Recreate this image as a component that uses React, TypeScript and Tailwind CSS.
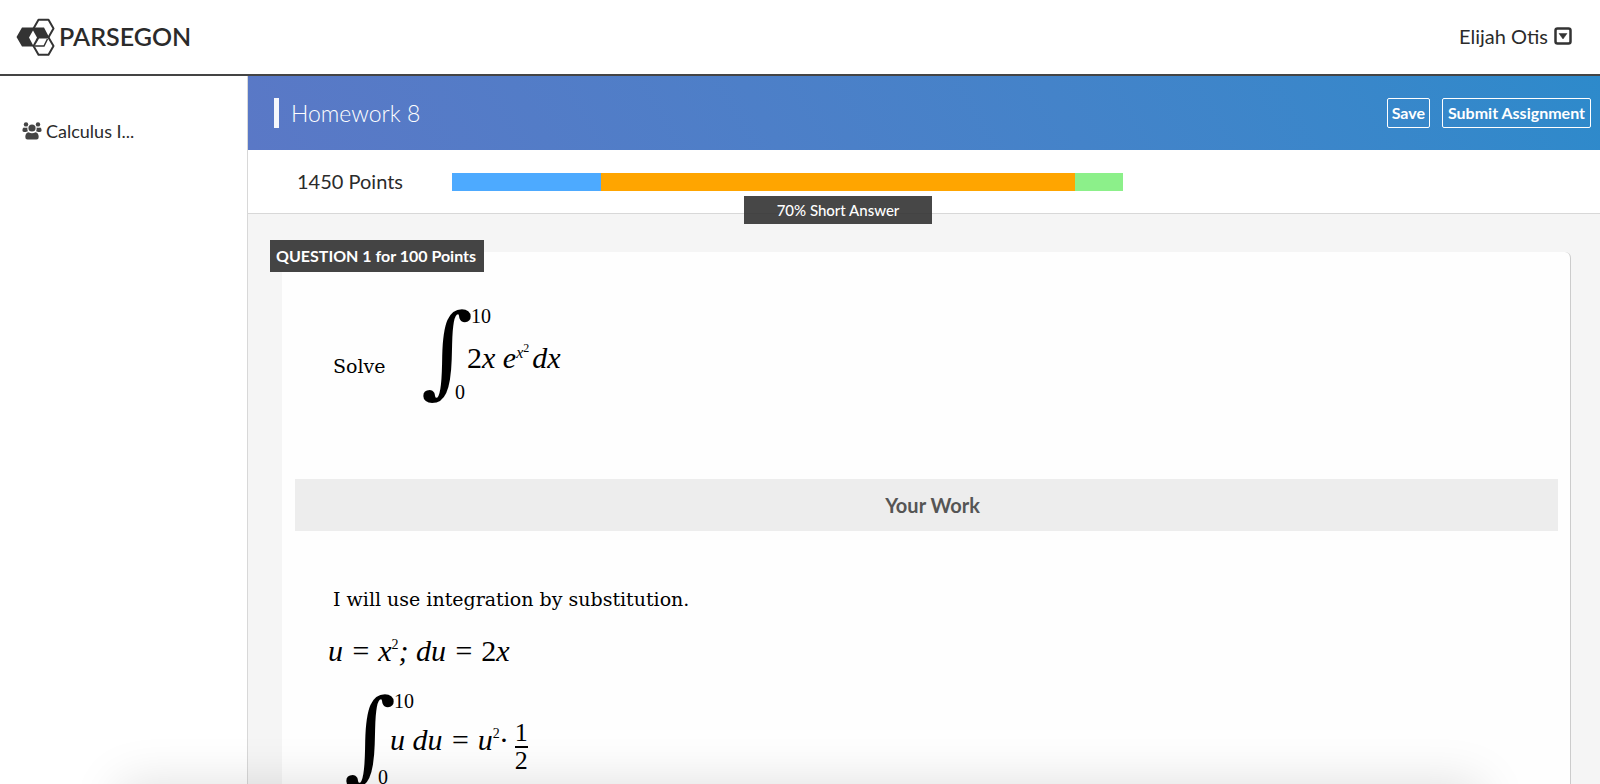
import { FC, ReactNode } from "react";

const segments = [
  { label: "Multiple Choice", share: 149, color: "bg-[#4daaff]" },
  { label: "Short Answer", share: 474, color: "bg-[#ffa500]" },
  { label: "Essay", share: 48, color: "bg-[#8cf08a]" },
];

const Logo: FC = () => (
  <svg viewBox="0 0 40 38" className="w-10 h-[38px]" aria-hidden="true">
    <path d="M0.500 19 6 9.500H28L33 19 31 22H20L18 28.500H6Z" fill="#333" />
    <g stroke="#333" strokeWidth="2" strokeLinejoin="round">
      <path d="M17.500 10.500 22.500 1.800H32.500L37.500 10.500 32.500 19.200H22.500Z" fill="none" />
      <path d="M17.500 28 22.500 19.500H32.500L37.500 28 32.500 36.700H22.500Z" fill="#fff" />
    </g>
    <path d="M13 19.500 17 12.500 21 19.500 17 27Z" fill="#fff" />
    <path d="M19 28H28L31.500 21" fill="none" stroke="#333" strokeWidth="1.500" />
  </svg>
);

const UsersIcon: FC = () => (
  <svg viewBox="0 0 20 18" className="w-5 h-[18px]" fill="#444" aria-hidden="true">
    <circle cx="10" cy="6" r="3.600" />
    <path d="M6.500 10.300Q10 12.300 13.500 10.300Q16.700 11 16.700 15Q16.700 17.600 14.500 17.600H5.500Q3.300 17.600 3.300 15Q3.300 11 6.500 10.300Z" />
    <circle cx="4" cy="2.400" r="2.200" />
    <circle cx="16" cy="2.400" r="2.200" />
    <path d="M1.800 5.500Q3.500 6.200 5.300 5.500Q5.200 8 6 9.200Q4.800 9.300 4 10H2Q0.400 10 0.400 8.300Q0.400 6 1.800 5.500Z" />
    <path d="M18.200 5.500Q16.500 6.200 14.700 5.500Q14.800 8 14 9.200Q15.200 9.300 16 10H18Q19.600 10 19.600 8.300Q19.600 6 18.200 5.500Z" />
  </svg>
);

const CaretIcon: FC = () => (
  <svg viewBox="0 0 18 18" className="size-[18px]" aria-hidden="true">
    <rect x="1.500" y="1.500" width="15" height="15" rx="2" fill="none" stroke="#333" strokeWidth="2.500" />
    <path d="M5 6.500H13L9 12Z" fill="#333" stroke="#333" strokeWidth="0.500" strokeLinejoin="round" />
  </svg>
);

const Integral: FC<{ from: string; to: string; children: ReactNode }> = ({
  from,
  to,
  children,
}) => (
  <div className="inline-grid grid-cols-[46px_auto] grid-rows-[20px_1fr_20px] h-24 font-['Liberation_Serif',serif]">
    <span className="row-span-3 font-['DejaVu_Serif',serif] text-[100px] leading-[90px]">
      ∫
    </span>
    <span className="pl-1 text-xl leading-5">{to}</span>
    <div className="flex items-center pt-2">
      <p className="whitespace-nowrap text-3xl italic">{children}</p>
    </div>
    <span className="-ml-3 text-xl leading-5">{from}</span>
  </div>
);

const Header: FC = () => (
  <header className="flex shrink-0 items-center justify-between h-[76px] pl-4 pr-7 border-b-2 border-[#444] bg-white">
    <a href="#" className="flex items-center gap-[3px] text-[25px] font-semibold">
      <Logo />
      PARSEGON
    </a>
    <button type="button" className="flex items-center gap-1.5 mb-0.5 text-xl">
      Elijah Otis
      <CaretIcon />
    </button>
  </header>
);

const Sidebar: FC = () => (
  <nav className="w-[248px] shrink-0 border-r border-[#d8d8d8] bg-white pt-[41px] pl-[22px]">
    <a href="#" className="flex items-center gap-1 text-lg">
      <UsersIcon />
      Calculus I...
    </a>
  </nav>
);

const TitleBar: FC = () => (
  <div className="flex items-center justify-between h-[74px] pl-[26px] pr-[9px] bg-linear-60 from-[#5a78c6] to-[#2d8acb] text-white">
    <h1 className="flex items-center gap-3 text-[23px] font-light">
      <span className="w-[5px] h-[30px] bg-[#f5f7fc]" />
      Homework 8
    </h1>
    <div className="flex gap-3 text-base font-bold">
      <button
        type="button"
        className="h-[30px] px-1 border border-white rounded-xs"
      >
        Save
      </button>
      <button
        type="button"
        className="h-[30px] px-[5px] border border-white rounded-xs"
      >
        Submit Assignment
      </button>
    </div>
  </div>
);

const PointsBar: FC = () => (
  <div className="flex items-center h-16 pl-[49px] border-b border-[#d8d8d8] bg-white">
    <span className="w-[155px] shrink-0 pb-0.5 text-xl">1450 Points</span>
    <div className="relative flex w-full max-w-[671px] h-[18px]">
      {segments.map((s) => (
        <div
          key={s.label}
          title={s.label}
          className={s.color}
          style={{ flexGrow: s.share }}
        />
      ))}
      <div className="absolute top-[23px] left-[292px] w-[188px] h-[28px] bg-[#333]/90 text-white text-center text-[15px] leading-7 font-medium">
        70% Short Answer
      </div>
    </div>
  </div>
);

const Question: FC = () => (
  <section className="relative mr-[29px] ml-[34px] mt-[38px] h-full pl-[13px] pr-3 bg-[#fefefe] border-r border-[#ccc] rounded-tr-md">
    <h2 className="absolute -top-3 -left-3 h-8 pl-1.5 pr-2 bg-[#444] text-white text-base leading-8 font-bold">
      QUESTION 1 for 100 Points
    </h2>

    <div className="flex items-center h-[227px] pl-[38px] text-black">
      <p className="w-[88px] font-['DejaVu_Serif',serif] text-[19px] leading-7">
        Solve
      </p>
      <div className="mb-6">
        <Integral from="0" to="10">
          <span className="not-italic">2</span>x e
          <sup className="-top-2.5 text-base">
            x<sup className="text-xs not-italic">2 </sup>
          </sup>
          dx
        </Integral>
      </div>
    </div>

    <h3 className="h-[52px] pl-3 bg-[#ededed] text-center text-xl leading-[52px] font-bold text-[#555]">
      Your Work
    </h3>

    <div className="pt-[54px] pl-[33px] text-black">
      <p className="pl-[5px] font-['DejaVu_Serif',serif] text-[19px] leading-7">
        I will use integration by substitution.
      </p>
      <p className="mt-5 font-['Liberation_Serif',serif] text-3xl italic">
        u = x<sup className="-top-3 text-sm not-italic">2</sup>; du ={" "}
        <span className="not-italic">2</span>x
      </p>
      <div className="mt-[22px] pl-4">
        <Integral from="0" to="10">
          u du = u<sup className="-top-3 text-sm not-italic">2</sup>·{" "}
          <span className="inline-flex flex-col -mb-2 align-middle text-[26px] leading-[26px] not-italic">
            <span className="border-b-2 border-black">1</span>
            <span>2</span>
          </span>
        </Integral>
      </div>
    </div>
  </section>
);

const App: FC = () => (
  <div className="relative flex flex-col h-screen overflow-hidden font-['Lato',sans-serif] text-[#2b2b2b]">
    <Header />
    <div className="flex flex-1 min-h-0">
      <Sidebar />
      <main className="flex-1 min-w-0 overflow-hidden bg-[#f5f5f5]">
        <TitleBar />
        <PointsBar />
        <Question />
      </main>
    </div>
    <div className="absolute top-full inset-x-[120px] h-20 shadow-[0_0_50px_rgba(0,0,0,0.13)]" />
  </div>
);

export default App;
